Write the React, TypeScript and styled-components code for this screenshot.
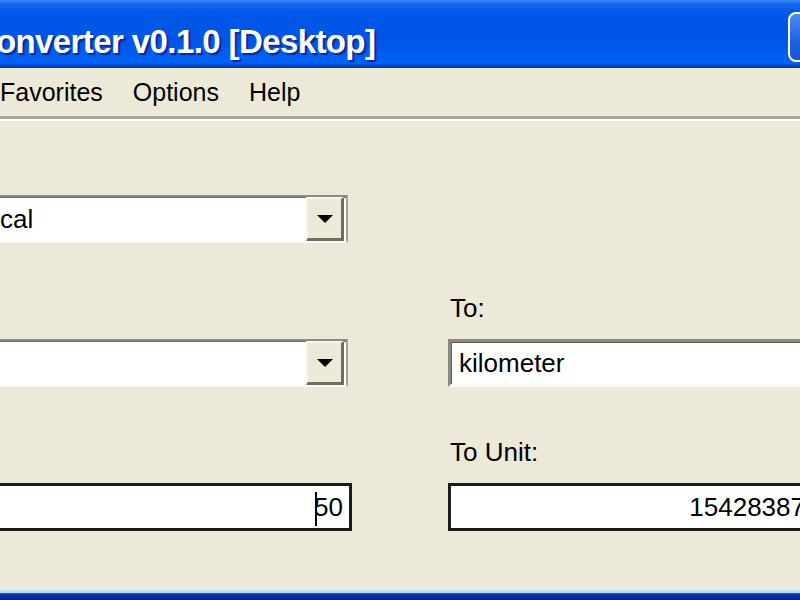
import React from 'react';
import styled, { createGlobalStyle } from 'styled-components';

const GlobalStyle = createGlobalStyle`
  html, body {
    margin: 0;
    padding: 0;
    background: #ece9d8;
  }
  body {
    font-family: "Liberation Sans", Arial, sans-serif;
  }
`;

const Window = styled.div`
  display: flex;
  flex-direction: column;
  width: 800px;
  height: 600px;
  overflow: hidden;
  background: #ece9d8;
`;

const TitleBar = styled.div`
  display: flex;
  align-items: flex-start;
  flex-shrink: 0;
  height: 68px;
  background: linear-gradient(
    to bottom,
    #3a8cf7 0px,
    #1768ef 4px,
    #0058e8 12px,
    #0055e6 40px,
    #0060f2 58px,
    #0062f5 63px,
    #0040c8 66px,
    #0034b4 68px
  );
`;

const TitleText = styled.div`
  margin: 22px 0 0 -4px;
  line-height: 40px;
  font-weight: 700;
  font-size: 33px;
  letter-spacing: -0.6px;
  white-space: nowrap;
  color: #fff;
  text-shadow: 2px 2px 1px #0a2a9c;
`;

const CaptionButton = styled.div`
  flex-shrink: 0;
  width: 48px;
  height: 46px;
  margin: 12px -40px 0 auto;
  border: 2px solid #fff;
  border-radius: 8px;
  background: linear-gradient(to bottom, #4a8df6, #1f5fe6 60%, #1a55d6);
`;

const MenuBar = styled.div`
  display: flex;
  flex-shrink: 0;
  height: 48px;
  margin-left: -15px;
`;

const MenuItem = styled.div`
  padding: 0 15px;
  line-height: 48px;
  font-size: 25px;
  color: #000;
`;

const Separator = styled.div`
  flex-shrink: 0;
  border-top: 3px solid #a9a695;
  border-bottom: 2px solid #fff;
`;

const Form = styled.div`
  display: grid;
  grid-template-columns: 366px 366px;
  column-gap: 96px;
  row-gap: 48px;
  margin-left: -14px;
  padding-top: 26px;
`;

const Field = styled.div`
  display: flex;
  flex-direction: column;
`;

const Label = styled.div`
  height: 34px;
  margin-bottom: 14px;
  padding-left: 2px;
  line-height: 34px;
  font-size: 26px;
  color: #000;
`;

const Combo = styled.div`
  display: flex;
  box-sizing: border-box;
  height: 48px;
  margin-right: 4px;
  border: 2px solid;
  border-color: #8c8a7e #a4a296 #fbfaf5 #8c8a7e;
  box-shadow: inset 1px 1px 0 #6f6d62;
  background: #fff;
`;

const ComboText = styled.div`
  flex: 1;
  padding-left: 12px;
  line-height: 44px;
  font-size: 26px;
  color: #000;
`;

const DropButton = styled.div`
  display: flex;
  align-items: center;
  justify-content: center;
  box-sizing: border-box;
  width: 38px;
  margin-right: 2px;
  border-style: solid;
  border-width: 2px 3px 3px 2px;
  border-color: #f6f5ef #6f6d62 #6f6d62 #f6f5ef;
  background: #ece9d8;
`;

const Arrow = styled.div`
  width: 0;
  height: 0;
  border-left: 8px solid transparent;
  border-right: 8px solid transparent;
  border-top: 8px solid #000;
`;

const TextBox = styled.div<{ focused?: boolean; align?: 'left' | 'right' }>`
  box-sizing: border-box;
  height: 48px;
  padding: 0 ${(p) => (p.align === 'right' ? '6px' : '0')} 0 ${(p) => (p.align === 'right' ? '0' : '8px')};
  border: 3px solid;
  border-color: ${(p) =>
    p.focused ? '#1c1c1c' : '#8c8a7e #f1efe2 #fbfaf5 #8c8a7e'};
  ${(p) => !p.focused && 'box-shadow: inset 1px 1px 0 #5f5d53;'}
  background: #fff;
  line-height: 42px;
  font-size: 26px;
  text-align: ${(p) => p.align ?? 'left'};
  white-space: nowrap;
  color: #000;
`;

const Caret = styled.span`
  display: inline-block;
  width: 0;
  height: 34px;
  margin-right: -3px;
  border-left: 2px solid #000;
  vertical-align: middle;
`;

const BottomFrame = styled.div`
  flex-shrink: 0;
  height: 10px;
  margin-top: auto;
  background: linear-gradient(
    to bottom,
    #c8e4fd 0px,
    #b6d8fa 3px,
    #2f5fd2 3px,
    #1230a8 5px,
    #0a2196 10px
  );
`;

export default function App() {
  return (
    <>
      <GlobalStyle />
      <Window>
        <TitleBar>
          <TitleText>onverter v0.1.0 [Desktop]</TitleText>
          <CaptionButton />
        </TitleBar>
        <MenuBar>
          <MenuItem>Favorites</MenuItem>
          <MenuItem>Options</MenuItem>
          <MenuItem>Help</MenuItem>
        </MenuBar>
        <Separator />
        <Form>
          <Field>
            <Label />
            <Combo>
              <ComboText>cal</ComboText>
              <DropButton>
                <Arrow />
              </DropButton>
            </Combo>
          </Field>
          <Field />
          <Field>
            <Label />
            <Combo>
              <ComboText />
              <DropButton>
                <Arrow />
              </DropButton>
            </Combo>
          </Field>
          <Field>
            <Label>To:</Label>
            <TextBox>kilometer</TextBox>
          </Field>
          <Field>
            <Label />
            <TextBox focused align="right">
              <Caret />
              50
            </TextBox>
          </Field>
          <Field>
            <Label>To Unit:</Label>
            <TextBox focused align="right">
              15428387
            </TextBox>
          </Field>
        </Form>
        <BottomFrame />
      </Window>
    </>
  );
}
